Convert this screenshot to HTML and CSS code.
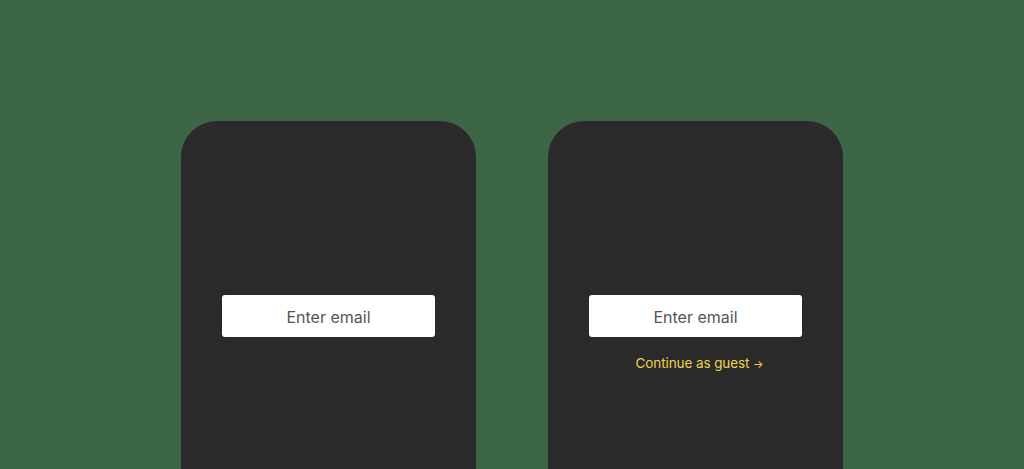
FILE: index.html
```html
<!DOCTYPE html>
<html>
<head>
<meta charset="utf-8">
<link rel="stylesheet" href="styles.css">
</head>
<body>
<main class="stage">
  <section class="card">
    <div class="field">Enter email</div>
  </section>
  <section class="card">
    <div class="field">Enter email</div>
    <a class="guest">Continue as guest <span class="arrow">→</span></a>
  </section>
</main>
</body>
</html>
```
FILE: styles.css
```css
html, body {
  margin: 0;
  padding: 0;
  height: 100%;
  overflow: hidden;
}
body {
  background: #3d6647;
  font-family: Inter, "Liberation Sans", sans-serif;
}
.stage {
  display: flex;
  justify-content: center;
  gap: 72px;
  padding-top: 121px;
}
.card {
  width: 295px;
  height: 348px;
  background: #2a2a2a;
  border-radius: 36px 36px 0 0;
  box-sizing: border-box;
  padding-top: 174px;
  display: flex;
  flex-direction: column;
  align-items: center;
}
.field {
  width: 213px;
  height: 42px;
  box-sizing: border-box;
  padding-top: 2px;
  background: #fff;
  border-radius: 3px;
  display: flex;
  align-items: center;
  justify-content: center;
  color: #555;
  font-size: 16px;
  font-weight: 400;
}
.guest {
  margin-top: 18px;
  margin-left: 8px;
  color: #f0d250;
  font-size: 13.5px;
  letter-spacing: -0.1px;
}
.arrow {
  font-size: 11px;
}
```
